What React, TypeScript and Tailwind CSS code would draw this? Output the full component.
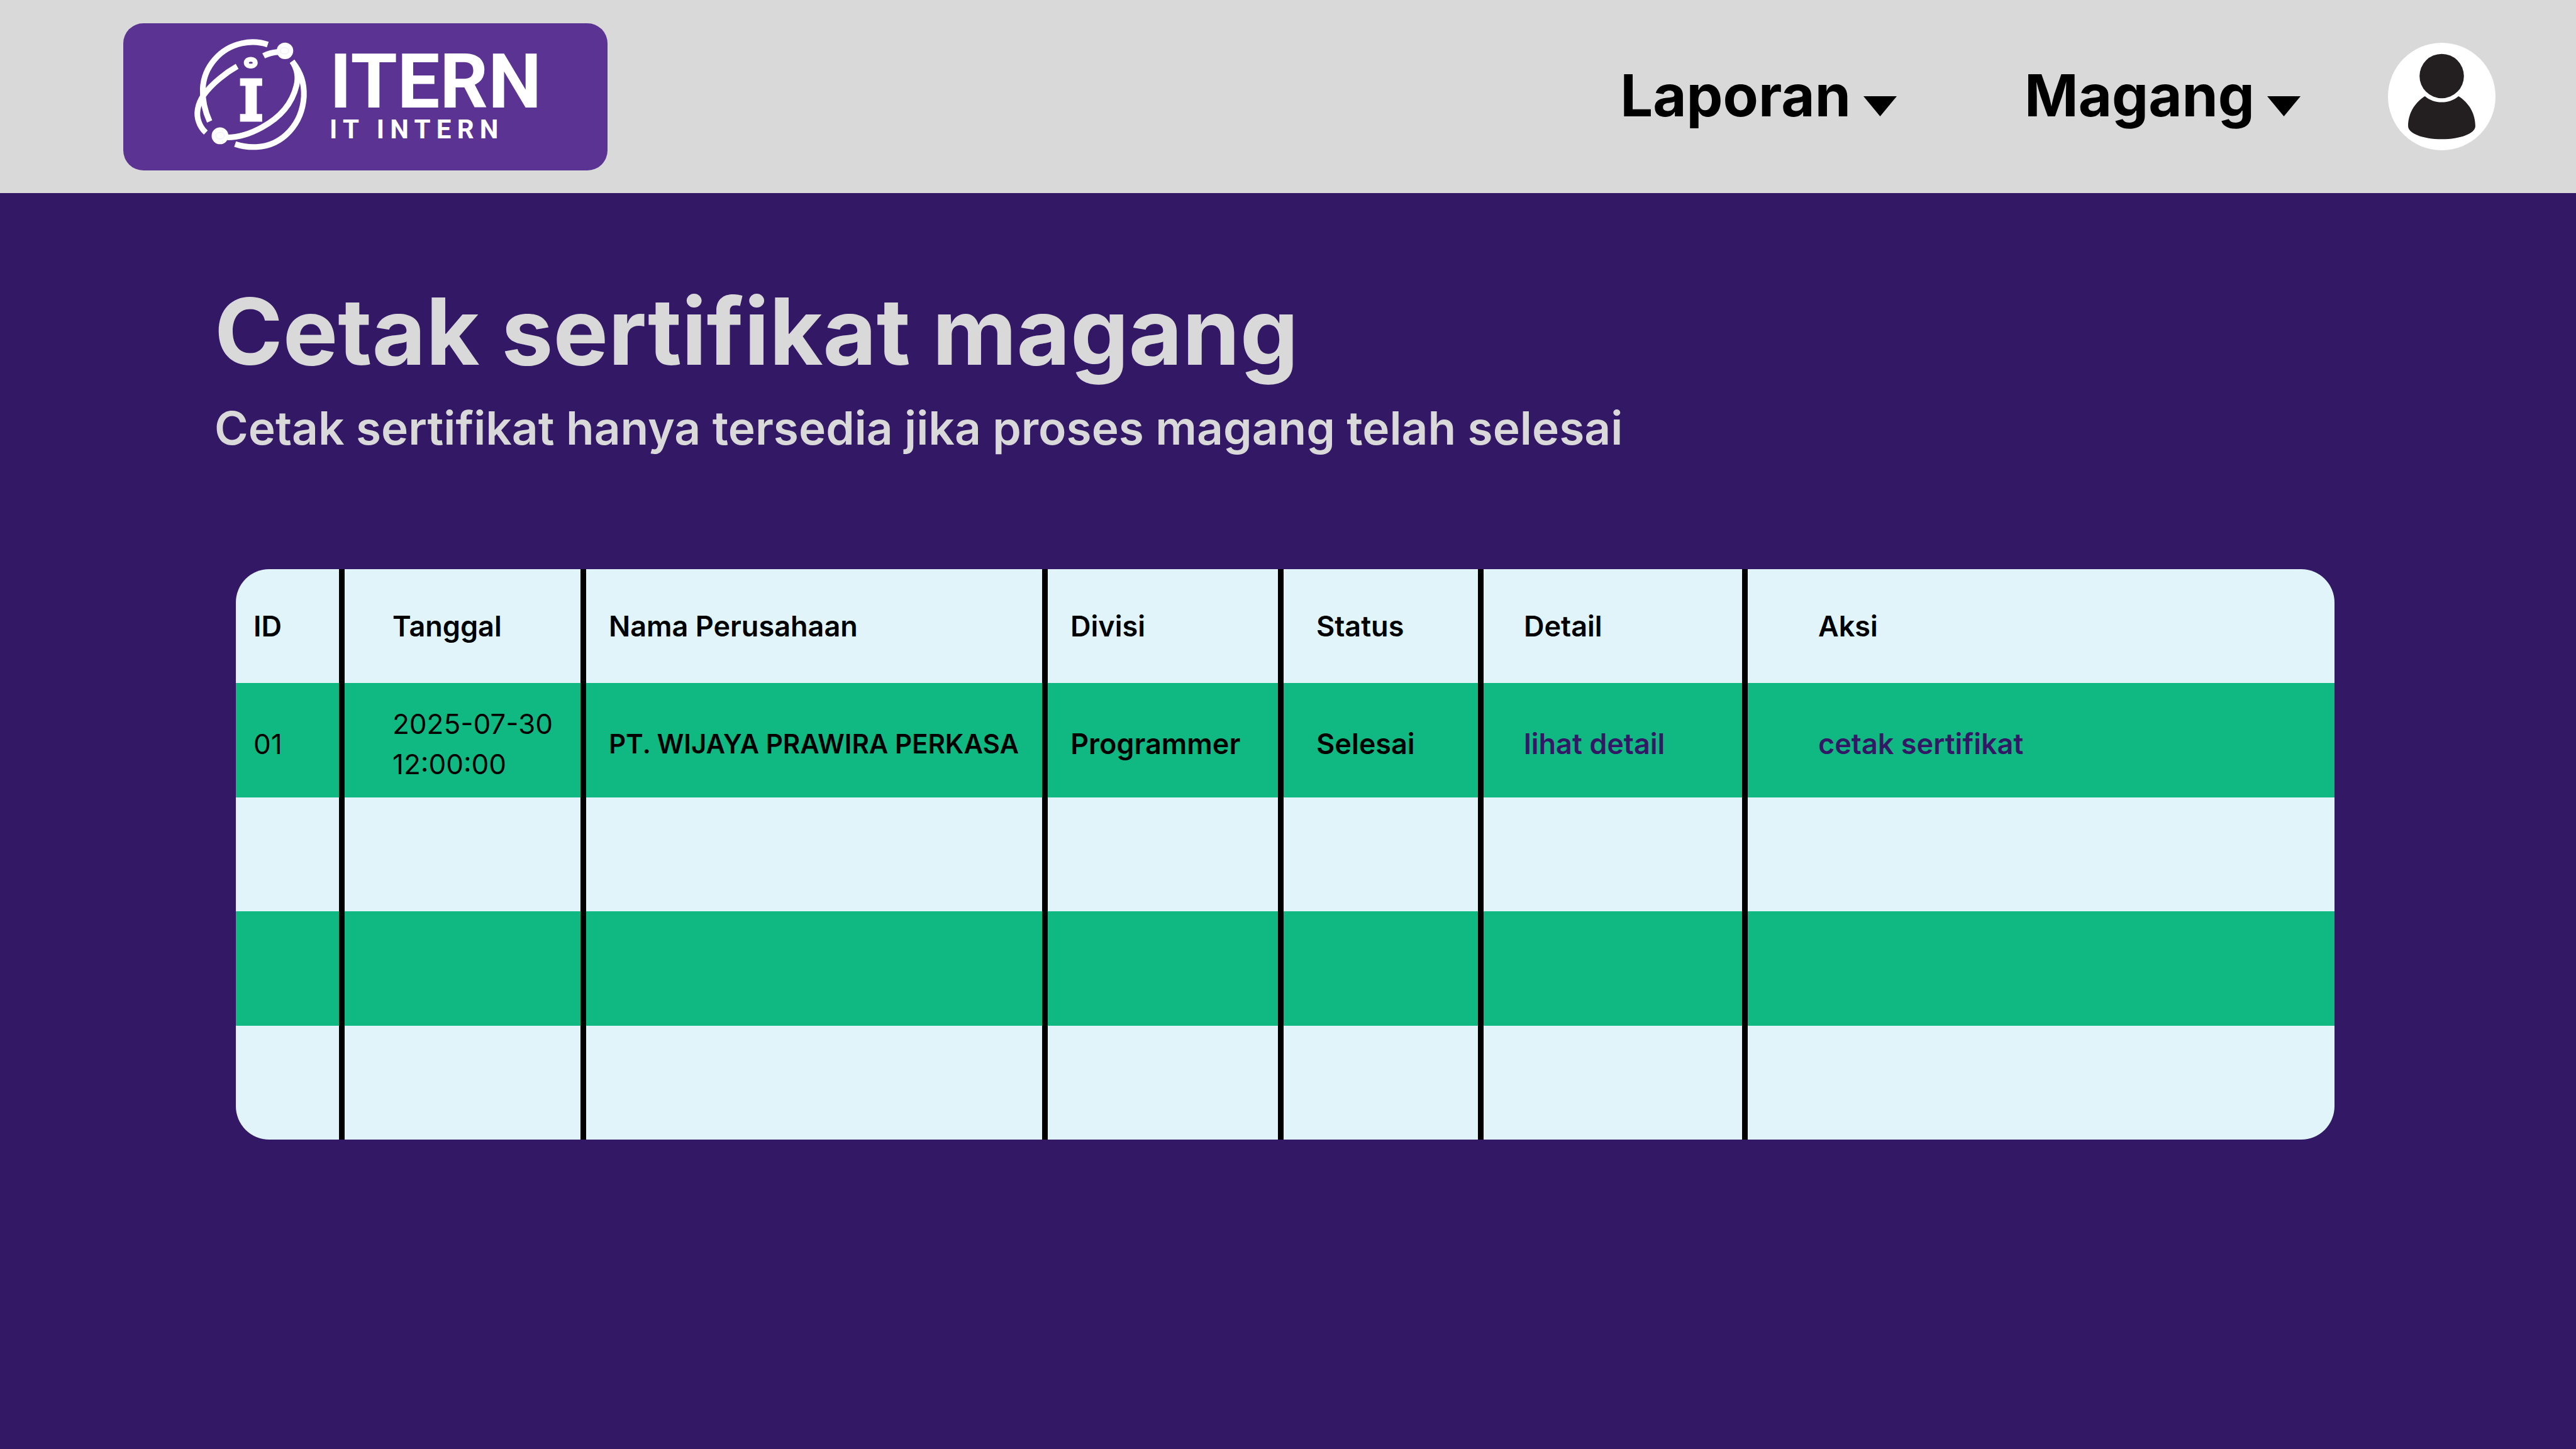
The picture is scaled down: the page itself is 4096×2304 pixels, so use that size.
import type { ReactNode } from "react";

function LogoMark() {
  return (
    <svg viewBox="0 0 1140 1080" className="h-48 w-[203px] shrink-0" fill="none" stroke="#ffffff" strokeWidth="51" aria-hidden="true">
      <path d="M712 95C640 70 560 66 480 84C290 125 140 290 131 490C127 600 150 690 192 782" />
      <path d="M438 290C340 345 215 440 140 545C80 630 70 720 95 785C108 825 130 856 158 882" />
      <path d="M930 245C1010 345 1040 440 1035 560C1020 800 850 1000 610 1011C540 1014 480 1005 420 985" />
      <path d="M930 245C980 320 985 400 968 465C925 640 800 760 660 835C560 890 450 925 350 925" />
      <path d="M675 196C715 175 760 163 810 161" />
      <circle cx="866" cy="151" r="74" fill="#ffffff" stroke="none" />
      <circle cx="285" cy="911" r="75" fill="#ffffff" stroke="none" />
      <ellipse cx="862" cy="151" rx="38" ry="29" stroke="#d9d3e8" strokeWidth="3" />
      <ellipse cx="286" cy="910" rx="39" ry="30" stroke="#d9d3e8" strokeWidth="3" />
      <path fill="#ffffff" stroke="none" fillRule="evenodd" d="M560 206C596 206 622 228 622 258C622 288 596 310 560 310C524 310 498 288 498 258C498 228 524 206 560 206ZM560 249C548 249 543 253 543 257C543 262 548 266 560 266C572 266 578 262 578 257C578 253 572 249 560 249Z" />
      <path fill="#ffffff" stroke="none" d="M464 396H662V464H614V716H662V785H464V716H513V464H464Z" />
    </svg>
  );
}

function NavButton({ children }: { children: ReactNode }) {
  return (
    <button type="button" className="flex items-baseline gap-5 text-[92px] leading-none font-bold">
      {children}
      <svg viewBox="0 0 53 32" className="h-8 w-[53px]" fill="#000000" aria-hidden="true">
        <path d="M0 0H53L26.500 32Z" />
      </svg>
    </button>
  );
}

const columns = [
  { label: "ID", width: "w-[173px]", pad: "pl-7" },
  { label: "Tanggal", width: "w-[384px]", pad: "pl-19" },
  { label: "Nama Perusahaan", width: "w-[734px]", pad: "pl-9" },
  { label: "Divisi", width: "w-[375px]", pad: "pl-9" },
  { label: "Status", width: "w-[318px]", pad: "pl-13" },
  { label: "Detail", width: "w-[420px]", pad: "pl-16" },
  { label: "Aksi", width: "", pad: "pl-28" },
];

const link = "text-[#331866]";
const figures = "text-[44px] font-normal";

const rows: ReactNode[][] = [
  [
    <span className={figures}>01</span>,
    <span className={figures}>
      2025-07-30
      <br />
      12:00:00
    </span>,
    <span className="text-[42px]">PT. WIJAYA PRAWIRA PERKASA</span>,
    "Programmer",
    "Selesai",
    <a href="#detail" className={link}>lihat detail</a>,
    <a href="#sertifikat" className={link}>cetak sertifikat</a>,
  ],
  [],
  [],
  [],
];

export default function App() {
  return (
    <div className="min-h-screen bg-[#331866] font-['Inter',sans-serif] text-black">
      <header className="flex h-[307px] items-center justify-between bg-[#d9d9d9] pr-32 pl-49">
        <a href="#beranda" className="flex h-[234px] w-[770px] items-center gap-[22px] rounded-4xl bg-[#5b3493] pb-2 pl-[103px] font-['Roboto',sans-serif] text-white">
          <LogoMark />
          <span className="flex flex-col pt-2">
            <span className="text-[120px] leading-[104px] font-bold">ITERN</span>
            <span className="text-[42px] leading-12 font-bold tracking-[0.22em]">IT INTERN</span>
          </span>
        </a>
        <div className="flex items-center gap-[139px]">
          <nav className="flex gap-[203px] pb-1">
            <NavButton>Laporan</NavButton>
            <NavButton>Magang</NavButton>
          </nav>
          <button type="button" aria-label="Profil" className="rounded-full bg-white">
            <svg viewBox="0 0 320 320" className="size-[171px]" fill="#231f20" aria-hidden="true">
              <circle cx="160" cy="99" r="66" />
              <path d="M110 159C124 171 141 177 160 177C179 177 196 171 210 159C242 179 260 212 260 248C260 270 216 287 160 287C104 287 60 270 60 248C60 212 78 179 110 159Z" />
            </svg>
          </button>
        </div>
      </header>
      <main className="pt-35 pr-96 pl-[341px]">
        <h1 className="text-[147px] leading-[160px] font-bold text-[#d9d9d9]">Cetak sertifikat magang</h1>
        <p className="mt-[30px] text-[73px] leading-[88px] font-semibold text-[#d9d9d9]">
          Cetak sertifikat hanya tersedia jika proses magang telah selesai
        </p>
        <div className="mt-45 ml-[34px] overflow-hidden rounded-[53px]">
          <table className="h-[907px] w-full table-fixed border-separate border-spacing-0 text-left text-[45px] leading-16 font-semibold">
            <thead>
              <tr className="h-[181px] bg-[#e0f4fa]">
                {columns.map((c) => (
                  <th key={c.label} scope="col" className={`border-r-9 border-black font-semibold last:border-r-0 ${c.width} ${c.pad}`}>
                    {c.label}
                  </th>
                ))}
              </tr>
            </thead>
            <tbody>
              {rows.map((row, r) => (
                <tr key={r} className="h-[181px] odd:bg-[#10b981] even:bg-[#e0f4fa]">
                  {columns.map((c, i) => (
                    <td key={c.label} className={`border-r-9 border-black pt-3 whitespace-nowrap last:border-r-0 ${c.pad}`}>
                      {row[i]}
                    </td>
                  ))}
                </tr>
              ))}
            </tbody>
          </table>
        </div>
      </main>
    </div>
  );
}
